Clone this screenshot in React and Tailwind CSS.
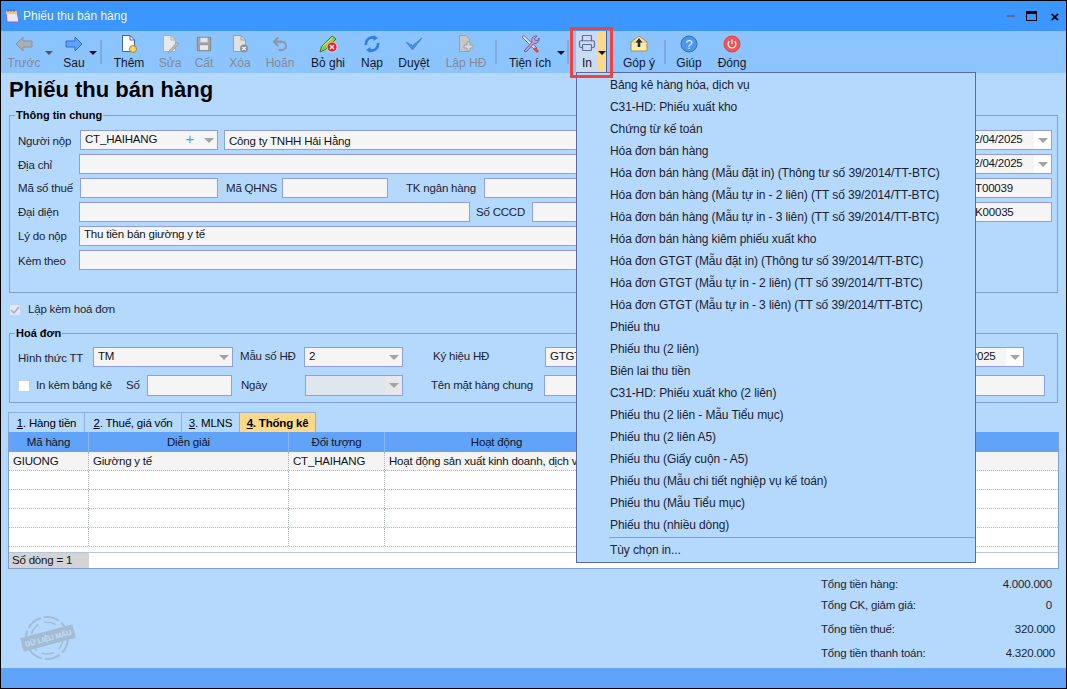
import { Printer, Undo2 } from "lucide-react";

const ArrowL = () => (
  <svg width="18" height="16" viewBox="0 0 18 16">
    <path d="M1 8 L8 1 V5 H17 V11 H8 V15 Z" fill="#a9aeb3" stroke="#8b9299" strokeWidth="1" />
  </svg>
);
const ArrowR = () => (
  <svg width="18" height="16" viewBox="0 0 18 16">
    <path d="M17 8 L10 1 V5 H1 V11 H10 V15 Z" fill="#5ea3fb" stroke="#2b6fd2" strokeWidth="1" />
  </svg>
);
const Doc = ({ stroke = "#44609e", fill = "#fff", children }) => (
  <svg width="20" height="20" viewBox="0 0 20 20">
    <path d="M3.5 1.5 H11 L15.5 6 V17.5 H3.5 Z" fill={fill} stroke={stroke} />
    <path d="M11 1.5 V6 H15.5" fill="none" stroke={stroke} />
    {children}
  </svg>
);
const IconThem = () => (
  <Doc>
    <circle cx="14" cy="15" r="3.5" fill="#f6d56a" stroke="#a58a2c" />
  </Doc>
);
const IconSua = () => (
  <Doc stroke="#a9aeb3" fill="#e6e8ea">
    <path d="M9 17 L17 8 L19 10 L11 18 L8 19 Z" fill="#b4b7ba" stroke="#9a9da0" strokeWidth="0.7" />
  </Doc>
);
const IconCat = () => (
  <svg width="16" height="16" viewBox="0 0 18 18">
    <path d="M1.5 1.5 H16.5 V16.5 H1.5 Z" fill="#a2a6aa" stroke="#7d8184" />
    <rect x="5" y="2" width="8" height="5" fill="#e4e6e8" />
    <rect x="4" y="10" width="10" height="6" fill="#e8eaec" stroke="#7d8184" strokeWidth="0.6" />
  </svg>
);
const IconXoa = () => (
  <Doc stroke="#989da2" fill="#dfe2e5">
    <circle cx="14" cy="14.5" r="4" fill="#8e9297" />
    <path d="M12.3 12.8 L15.7 16.2 M15.7 12.8 L12.3 16.2" stroke="#fff" strokeWidth="1.1" />
  </Doc>
);
const IconGhi = () => (
  <svg width="24" height="20" viewBox="0 0 24 20">
    <path d="M4 18 L5.5 12.5 L16 2 L20 5 L9.5 15.5 Z" fill="#8fc93f" stroke="#4a7d1a" />
    <path d="M7 12 L17 3.5" stroke="#d5ef9c" />
    <circle cx="16" cy="13" r="5" fill="#e8202a" stroke="#fff" strokeWidth="0.6" />
    <path d="M14 11 L18 15 M18 11 L14 15" stroke="#fff" strokeWidth="1.4" />
  </svg>
);
const IconNap = () => (
  <svg width="18" height="18" viewBox="0 0 18 18" fill="none">
    <path d="M3 10 A6.5 6.5 0 0 1 12 3" stroke="#2f7fdc" strokeWidth="2.6" />
    <path d="M15 8 A6.5 6.5 0 0 1 6 15" stroke="#2f7fdc" strokeWidth="2.6" />
    <path d="M10.5 0 L15 3 L10.5 6 Z" fill="#2f7fdc" />
    <path d="M7.5 18 L3 15 L7.5 12 Z" fill="#2f7fdc" />
  </svg>
);
const IconDuyet = () => (
  <svg width="18" height="16" viewBox="0 0 18 16" fill="none">
    <path d="M1 6 L7.5 14 L17 2 L7.5 9.5 Z" fill="#4d8fe0" stroke="#3f80d4" strokeWidth="0.8" />
  </svg>
);
const IconLap = () => (
  <svg width="20" height="20" viewBox="0 0 20 20">
    <path d="M3.5 1.5 H10 L13.5 5 V17.5 H3.5 Z" fill="#c5c8cb" stroke="#9a9ea2" />
    <path d="M11 8 H14 V11 H17 V14 H14 V17 H11 V14 H8 V11 H11 Z" fill="#d8dadc" stroke="#9a9ea2" />
  </svg>
);
const IconTool = () => (
  <svg width="20" height="20" viewBox="0 0 20 20" fill="none">
    <path d="M2 3 L4 1.5 L17 14 L15 16 Z" fill="#e9e4f2" stroke="#7a5ea8" />
    <path d="M14 14 L18 18" stroke="#e0483a" strokeWidth="3" />
    <path d="M4 17 L12 8 C11 4 13.5 1.5 17 2 L14.5 4.7 L15.5 6.5 L17.5 6.7 L19 4 C19.5 8 16.5 10 14 9.5 L6 18 Z" fill="#b9a4d8" stroke="#6f4f9e" strokeWidth="0.9" />
  </svg>
);
const IconGop = () => (
  <svg width="20" height="18" viewBox="0 0 20 18">
    <path d="M2 7 L10 1 L18 7 V16 H2 Z" fill="#ffe9a8" stroke="#a88f4a" />
    <path d="M2 7 H18" stroke="#a88f4a" strokeWidth="0.5" />
    <path d="M10 3 L13.5 7.5 H11.3 V12 H8.7 V7.5 H6.5 Z" fill="#20303f" />
  </svg>
);
const IconHelp = () => (
  <svg width="18" height="18" viewBox="0 0 18 18">
    <circle cx="9" cy="9" r="8" fill="#4d96ee" stroke="#2d72c8" />
    <text x="9" y="13.5" textAnchor="middle" fontSize="13" fontFamily="Liberation Sans" fill="#e8f2ff">?</text>
  </svg>
);
const IconPower = () => (
  <svg width="18" height="18" viewBox="0 0 18 18" fill="none">
    <circle cx="9" cy="9" r="8" fill="#f0555a" stroke="#d84348" />
    <path d="M6.3 6.3 A3.9 3.9 0 1 0 11.7 6.3" stroke="#fff" strokeWidth="1.2" />
    <path d="M9 4.5 V9" stroke="#fff" strokeWidth="1.2" />
  </svg>
);

const Caret = ({ className = "" }) => (
  <span className={"block w-0 h-0 border-x-[4px] border-x-transparent border-t-[4px] border-t-[#111] " + className} />
);
const ComboArrow = () => (
  <span className="block w-0 h-0 border-x-[5px] border-x-transparent border-t-[5px] border-t-[#a3a3a3]" />
);

const ToolBtn = ({ icon, label, off, className }) => (
  <div className={"flex flex-col items-center shrink-0 pt-[2px] " + className}>
    <div className="h-[21px] flex items-center justify-center">{icon}</div>
    <div className={"h-[15px] leading-[15px] mt-[2px] whitespace-nowrap " + (off ? "text-[#84898f]" : "text-[#14181f]")}>{label}</div>
  </div>
);
const Sep = ({ className }) => <div className={"w-[2px] h-[24px] mt-[9px] bg-[#7fa9d8] shrink-0 " + className} />;

const Label = ({ className = "", children }) => (
  <div className={"shrink-0 whitespace-nowrap text-[#1c2430] " + className}>{children}</div>
);
const Input = ({ className = "", children }) => (
  <div className={"shrink-0 h-full border border-[#8d9fe0] bg-[#f5f5f5] px-[4px] leading-[17px] whitespace-nowrap overflow-hidden text-[#10141c] " + className}>{children}</div>
);
const Combo = ({ className = "", btn = "bg-transparent", children, extra }) => (
  <div className={"shrink-0 h-full flex border border-[#8d9fe0] bg-[#f5f5f5] text-[#10141c] " + className}>
    <div className="flex-1 px-[4px] leading-[17px] whitespace-nowrap overflow-hidden">{children}</div>
    {extra}
    <div className={"w-[17px] flex items-center justify-center " + btn}><ComboArrow /></div>
  </div>
);

const menuItems = [
  "Bảng kê hàng hóa, dịch vụ",
  "C31-HD: Phiếu xuất kho",
  "Chứng từ kế toán",
  "Hóa đơn bán hàng",
  "Hóa đơn bán hàng (Mẫu đặt in) (Thông tư số 39/2014/TT-BTC)",
  "Hóa đơn bán hàng (Mẫu tự in - 2 liên) (TT số 39/2014/TT-BTC)",
  "Hóa đơn bán hàng (Mẫu tự in - 3 liên) (TT số 39/2014/TT-BTC)",
  "Hóa đơn bán hàng kiêm phiếu xuất kho",
  "Hóa đơn GTGT (Mẫu đặt in) (Thông tư số 39/2014/TT-BTC)",
  "Hóa đơn GTGT (Mẫu tự in - 2 liên) (TT số 39/2014/TT-BTC)",
  "Hóa đơn GTGT (Mẫu tự in - 3 liên) (TT số 39/2014/TT-BTC)",
  "Phiếu thu",
  "Phiếu thu (2 liên)",
  "Biên lai thu tiền",
  "C31-HD: Phiếu xuất kho (2 liên)",
  "Phiếu thu (2 liên - Mẫu Tiểu mục)",
  "Phiếu thu (2 liên A5)",
  "Phiếu thu (Giấy cuộn - A5)",
  "Phiếu thu (Mẫu chi tiết nghiệp vụ kế toán)",
  "Phiếu thu (Mẫu Tiểu mục)",
  "Phiếu thu (nhiều dòng)",
];

const cols = ["w-[80px]", "w-[200px]", "w-[96px]", "w-[224px]"];

const GridRow = ({ cells = ["", "", "", ""], className = "" }) => (
  <div className={"flex h-[19px] border-b border-dotted border-[#aeb4ba] " + className}>
    {cells.map((c, i) => (
      <div key={i} className={"px-[4px] leading-[19px] whitespace-nowrap overflow-hidden border-r border-dotted border-[#aeb4ba] text-[#10141c] " + cols[i]}>{c}</div>
    ))}
  </div>
);

const Stamp = () => (
  <svg width="58" height="50" viewBox="0 0 58 50" className="ml-[19px] mt-[44px] shrink-0" fill="none" stroke="#a3bcd4">
    <circle cx="27" cy="25" r="21" strokeWidth="2" strokeDasharray="16 3" />
    <circle cx="27" cy="25" r="16" strokeWidth="1.5" strokeDasharray="12 6" />
    <g transform="rotate(-15 28 25)">
      <rect x="1" y="18" width="54" height="14" fill="#a3bcd4" stroke="none" />
      <text x="28" y="28" textAnchor="middle" fontSize="7.5" fontWeight="700" fontFamily="Liberation Sans" fill="#c4dcf4" stroke="none">DỮ LIỆU MẪU</text>
    </g>
  </svg>
);

export default function App() {
  return (
    <div className="relative w-[1067px] h-[689px] overflow-hidden border border-black bg-[#b5d9fd] flex flex-col text-[12px] font-['Liberation_Sans',sans-serif]">
      {/* title bar */}
      <div className="h-[30px] shrink-0 bg-[#3b96ff] flex items-center">
        <svg width="16" height="16" viewBox="0 0 16 16" className="ml-[3px]">
          <path d="M2 3 H13 L15 14 H3 Z" fill="#e9e6f7" stroke="#7d6fb6" />
          <path d="M2 3 H13 V6 H2 Z" fill="#f4c95a" />
          <path d="M4 1 V4 M7 1 V4 M10 1 V4" stroke="#6a5aa8" />
        </svg>
        <div className="ml-[3px] text-white/95">Phiếu thu bán hàng</div>
        <div className="ml-auto flex items-center">
          <div className="w-[8px] h-[2px] bg-[#64707e]" />
          <div className="ml-[11px] w-[11px] h-[10px] border border-black border-t-[3px]" />
          <div className="ml-[12px] mr-[5px] w-[12px] text-center font-bold text-[15px] leading-none text-black">×</div>
        </div>
      </div>

      {/* toolbar */}
      <div className="h-[42px] shrink-0 bg-[#8cc4ff] flex">
        <ToolBtn off icon={<ArrowL />} label="Trước" className="ml-[3px] w-[40px]" />
        <div className="relative w-[10px]"><Caret className="absolute left-[1px] top-[20px] !border-t-[#555]" /></div>
        <ToolBtn icon={<ArrowR />} label="Sau" className="w-[40px]" />
        <div className="relative w-[6px]"><Caret className="absolute -left-[5px] top-[20px]" /></div>
        <Sep />
        <ToolBtn icon={<IconThem />} label="Thêm" className="ml-[7px] w-[40px]" />
        <ToolBtn off icon={<IconSua />} label="Sửa" className="ml-[3px] w-[36px]" />
        <ToolBtn off icon={<IconCat />} label="Cất" className="ml-[2px] w-[28px]" />
        <ToolBtn off icon={<IconXoa />} label="Xóa" className="ml-[4px] w-[36px]" />
        <ToolBtn off icon={<Undo2 size={18} color="#8f959b" strokeWidth={2.6} />} label="Hoãn" className="ml-[4px] w-[36px]" />
        <ToolBtn icon={<IconGhi />} label="Bỏ ghi" className="ml-[8px] w-[44px]" />
        <ToolBtn icon={<IconNap />} label="Nạp" className="ml-[4px] w-[36px]" />
        <ToolBtn icon={<IconDuyet />} label="Duyệt" className="ml-[4px] w-[40px]" />
        <ToolBtn off icon={<IconLap />} label="Lập HĐ" className="ml-[10px] w-[44px]" />
        <Sep className="ml-[7px]" />
        <ToolBtn icon={<IconTool />} label="Tiện ích" className="ml-[7px] w-[52px]" />
        <div className="relative w-[11px]"><Caret className="absolute left-[1px] top-[20px]" /></div>
        <Sep />
        <div className="ml-[7px] w-[31px] flex shrink-0 border-r border-[#3a66b8]">
          <div className="w-[22px] bg-[#ccdcf0] flex flex-col items-center pt-[1px]">
            <div className="h-[21px] flex items-center"><Printer size={18} color="#5b6f9e" strokeWidth={1.6} /></div>
            <div className="h-[15px] leading-[15px] mt-[3px] text-[#14181f]">In</div>
          </div>
          <div className="flex-1 bg-[#ffd98a] pt-[20px] flex justify-center"><Caret /></div>
        </div>
        <Sep className="ml-[3px]" />
        <ToolBtn icon={<IconGop />} label="Góp ý" className="ml-[7px] w-[40px]" />
        <Sep className="ml-[5px]" />
        <ToolBtn icon={<IconHelp />} label="Giúp" className="ml-[5px] w-[36px]" />
        <ToolBtn icon={<IconPower />} label="Đóng" className="ml-[5px] w-[40px]" />
      </div>

      <div className="flex-1 flex flex-col min-h-0">
        <h1 className="h-[35px] shrink-0 pl-[8px] font-bold text-[22px] leading-[34px] text-black">Phiếu thu bán hàng</h1>

        <div className="px-[8px] shrink-0 text-[11.5px] tracking-[-0.2px]">
          <fieldset className="border border-[#7f9fd4] h-[185px] min-w-0">
            <legend className="ml-[5px] px-[1px] h-[14px] leading-[14px] font-bold text-[11px] tracking-normal text-black">Thông tin chung</legend>
            <div className="pl-[8px] pr-[5px] pt-[8px] flex flex-col gap-[4px]">
              <div className="flex h-[20px] items-stretch">
                <Label className="w-[62px] leading-[22px]">Người nộp</Label>
                <Combo className="w-[138px]" extra={<span className="text-[#5b9be0] text-[15px] leading-[16px] pr-[6px]">+</span>}>CT_HAIHANG</Combo>
                <Input className="ml-[6px] w-[680px] !leading-[20px]">Công ty TNHH Hải Hằng</Input>
                <Combo className="ml-auto w-[100px] h-[19px]" btn="bg-white"><span className="pl-[10px]">12/04/2025</span></Combo>
              </div>
              <div className="flex h-[20px]">
                <Label className="w-[61px] leading-[22px]">Địa chỉ</Label>
                <Input className="w-[800px]" />
                <Combo className="ml-auto w-[100px] h-[19px]" btn="bg-white"><span className="pl-[10px]">12/04/2025</span></Combo>
              </div>
              <div className="flex h-[20px]">
                <Label className="w-[62px] leading-[21px]">Mã số thuế</Label>
                <Input className="w-[138px]" />
                <Label className="ml-[8px] w-[56px] leading-[21px]">Mã QHNS</Label>
                <Input className="w-[106px]" />
                <Label className="ml-[18px] w-[78px] leading-[21px]">TK ngân hàng</Label>
                <Input className="w-[300px]" />
                <Input className="ml-auto w-[90px] !leading-[19px]">NT00039</Input>
              </div>
              <div className="flex h-[20px]">
                <Label className="w-[61px] leading-[21px]">Đại diện</Label>
                <Input className="w-[391px]" />
                <Label className="ml-[6px] w-[56px] leading-[21px]">Số CCCD</Label>
                <Input className="w-[200px]" />
                <Input className="ml-auto w-[90px] !leading-[19px]">NK00035</Input>
              </div>
              <div className="flex h-[20px]">
                <Label className="w-[61px] leading-[21px]">Lý do nộp</Label>
                <Input className="w-[800px] !leading-[14px]">Thu tiền bán giường y tế</Input>
              </div>
              <div className="flex h-[20px]">
                <Label className="w-[61px] leading-[22px]">Kèm theo</Label>
                <Input className="w-[800px]" />
              </div>
            </div>
          </fieldset>

          <div className="mt-[11px] h-[12px] flex items-center">
            <div className="w-[12px] h-[12px] bg-[#d9e9fa] border border-[#c4d4e4] flex items-center justify-center">
              <svg width="10" height="10" viewBox="0 0 10 10" fill="none"><path d="M1 5 L4 8 L9 2" stroke="#a3a9af" strokeWidth="1.5" /></svg>
            </div>
            <span className="ml-[7px] text-[#1c2430]">Lập kèm hoá đơn</span>
          </div>

          <fieldset className="mt-[10px] border border-[#7f9fd4] h-[77px] min-w-0">
            <legend className="ml-[5px] px-[1px] h-[14px] leading-[14px] font-bold text-[11px] tracking-normal text-black">Hoá đơn</legend>
            <div className="pl-[8px] pr-[12px] pt-[7px] flex flex-col gap-[8px]">
              <div className="flex h-[20px]">
                <Label className="w-[75px] leading-[22px]">Hình thức TT</Label>
                <Combo className="w-[140px]">TM</Combo>
                <Label className="ml-[7px] w-[64px] leading-[18px]">Mẫu số HĐ</Label>
                <Combo className="w-[99px] h-[19px]">2</Combo>
                <Label className="ml-[30px] w-[112px] leading-[19px]">Ký hiệu HĐ</Label>
                <Input className="w-[300px]">GTGT</Input>
                <Combo className="ml-auto mr-[21px] w-[100px] h-[18px]" btn="bg-white"><span className="pl-[11px]">12/04/2025</span></Combo>
              </div>
              <div className="flex h-[21px] items-stretch">
                <div className="w-[12px] h-[12px] mt-[5px] bg-white border border-[#c4d4e4] shrink-0" />
                <Label className="ml-[6px] w-[90px] leading-[21px]">In kèm bảng kê</Label>
                <Label className="w-[21px] leading-[21px]">Số</Label>
                <Input className="w-[85px]" />
                <Label className="ml-[9px] w-[64px] leading-[21px]">Ngày</Label>
                <Combo className="w-[98px] !bg-[#dfe6ee]" btn="bg-[#e8e8ec]" />
                <Label className="ml-[28px] w-[113px] leading-[21px]">Tên mặt hàng chung</Label>
                <Input className="w-[501px] !ml-0" />
              </div>
            </div>
          </fieldset>
        </div>

        {/* tabs + grid */}
        <div className="px-[7px] mt-[9px] shrink-0 text-[11.5px] tracking-[-0.2px]">
          <div className="flex h-[20px]">
            <div className="w-[77px] border border-b-0 border-[#8fb0dc] text-center leading-[20px]"><u>1</u>. Hàng tiền</div>
            <div className="w-[97px] border border-l-0 border-b-0 border-[#8fb0dc] text-center leading-[20px]"><u>2</u>. Thuế, giá vốn</div>
            <div className="w-[58px] border border-l-0 border-b-0 border-[#8fb0dc] text-center leading-[20px]"><u>3</u>. MLNS</div>
            <div className="w-[76px] border border-l-0 border-b-0 border-[#8fb0dc] bg-[#ffd98a] text-center leading-[20px] font-bold"><u>4</u>. Thống kê</div>
          </div>
          <div className="border border-t-0 border-[#7f9fd4] bg-white h-[137px] flex flex-col">
            <div className="flex h-[20px] bg-[#62a3fa] text-[#10141c] shrink-0">
              {["Mã hàng", "Diễn giải", "Đối tượng", "Hoạt động"].map((h, i) => (
                <div key={h} className={"text-center leading-[21px] border-r border-[#86b4ec] " + cols[i]}>{h}</div>
              ))}
            </div>
            <GridRow className="bg-[#f4f4f4]" cells={["GIUONG", "Giường y tế", "CT_HAIHANG", "Hoạt động sản xuất kinh doanh, dịch vụ"]} />
            <GridRow />
            <GridRow />
            <GridRow />
            <GridRow />
            <div className="flex-1" />
            <div className="h-[16px] flex border-t border-[#b6c8d8] shrink-0">
              <div className="w-[80px] bg-[#d4d4d4] pl-[3px] leading-[15px] text-[#10141c]">Số dòng = 1</div>
            </div>
          </div>
        </div>

        {/* totals */}
        <div className="flex-1 flex min-h-0 text-[11.5px] tracking-[-0.2px]">
          <Stamp />
          <div className="ml-auto mr-[11px] w-[234px] pt-[5px] text-[#1c2430]">
            <div className="flex justify-between h-[20px] leading-[20px] pr-[3px]"><span>Tổng tiền hàng:</span><span>4.000.000</span></div>
            <div className="flex justify-between h-[20px] leading-[20px] mt-[1px] pr-[3px]"><span>Tổng CK, giảm giá:</span><span>0</span></div>
            <div className="flex justify-between h-[20px] leading-[20px] mt-[4px]"><span>Tổng tiền thuế:</span><span>320.000</span></div>
            <div className="flex justify-between h-[20px] leading-[20px] mt-[4px]"><span>Tổng tiền thanh toán:</span><span>4.320.000</span></div>
          </div>
        </div>
      </div>

      <div className="h-[20px] shrink-0 bg-[#62a3fa]" />

      {/* In dropdown */}
      <div className="absolute left-[575px] top-[71px] w-[400px] h-[491px] border border-[#5a6aa8] bg-[#b5d9fd] pt-[1px] tracking-[-0.1px]">
        {menuItems.map((m) => (
          <div key={m} className="h-[22px] pl-[33px] leading-[22px] whitespace-nowrap text-[#1a2230]">{m}</div>
        ))}
        <div className="ml-[32px] mt-[1px] h-[1px] bg-[#8e9fb0]" />
        <div className="h-[24px] pl-[33px] leading-[24px] text-[#1a2230]">Tùy chọn in...</div>
      </div>

      {/* red highlight around In */}
      <div className="absolute left-[569px] top-[26px] w-[43px] h-[51px] border-[3px] border-[#f5403c]" />
    </div>
  );
}
